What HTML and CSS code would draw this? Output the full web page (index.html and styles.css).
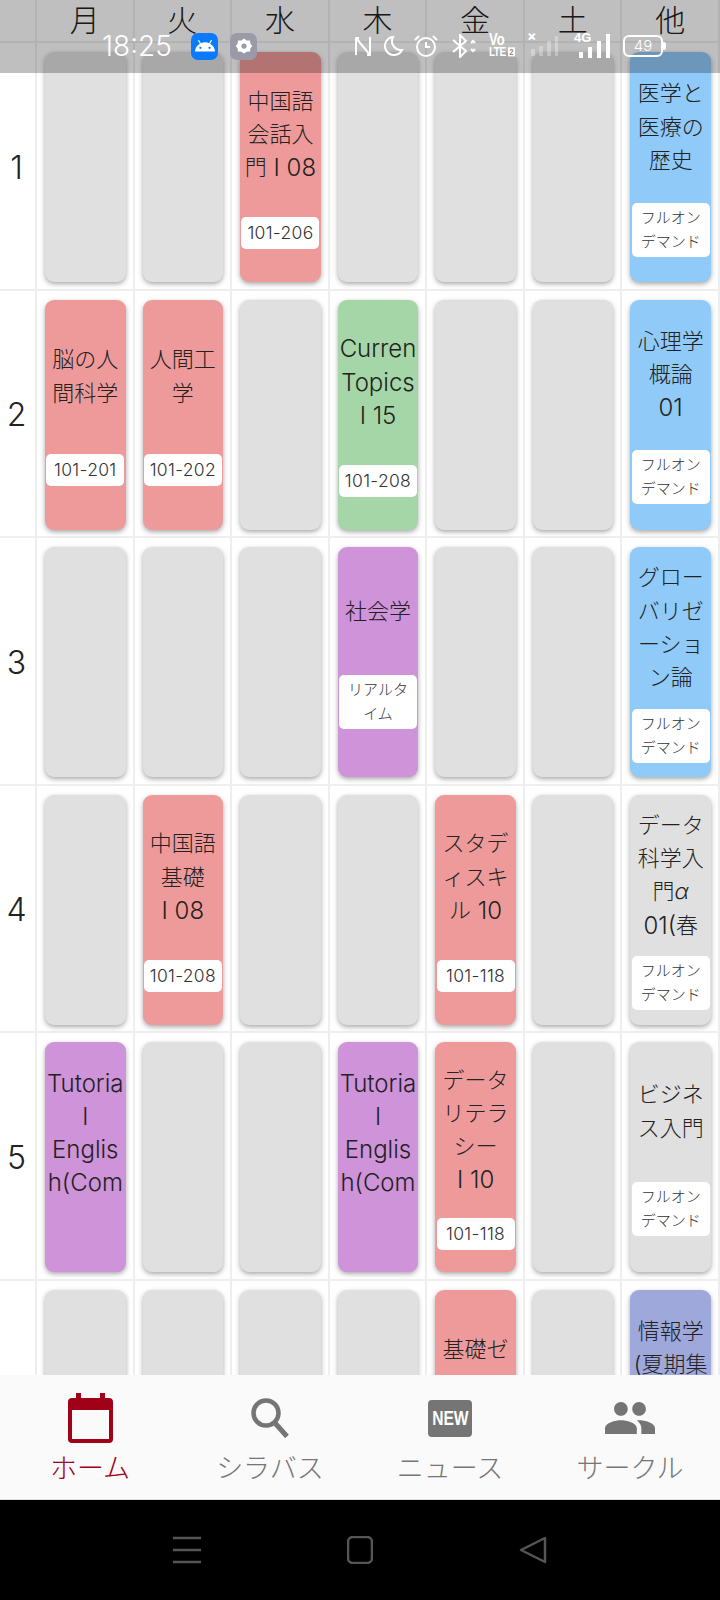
FILE: index.html
```html
<!DOCTYPE html>
<html lang="ja">
<head>
    <meta charset="UTF-8">
    <meta name="viewport" content="width=device-width, initial-scale=1.0">
    <title>時間割</title>
    <link rel="stylesheet" href="styles.css">
</head>
<body>
    <div class="statusbar">
        <span class="time">18:25</span>
        <span class="notif notif-blue">
            <svg viewBox="0 0 24 24" width="22" height="22"><path fill="#fff" d="M17.6 9.48l1.84-3.18c.16-.31.04-.69-.26-.85a.637.637 0 0 0-.83.22l-1.88 3.24a11.43 11.43 0 0 0-8.94 0L5.65 5.67a.643.643 0 0 0-.87-.2c-.28.18-.37.54-.22.83L6.4 9.48A10.78 10.78 0 0 0 1 18h22a10.78 10.78 0 0 0-5.4-8.52zM7 15.25a1.25 1.25 0 1 1 0-2.5 1.25 1.25 0 0 1 0 2.5zm10 0a1.25 1.25 0 1 1 0-2.5 1.25 1.25 0 0 1 0 2.5z"/></svg>
        </span>
        <span class="notif notif-grey">
            <svg viewBox="0 0 24 24" width="18" height="18"><path fill="#fff" fill-rule="evenodd" d="M12 2l3.5 2.5 4.5.3.6 4.2L23 12l-2.4 3-.6 4.2-4.5.3L12 22l-3.5-2.5-4.500-.3L3.400 15 1 12l2.400-3 .6-4.200 4.500-.3zM12 8.500a3.500 3.500 0 1 0 0 7 3.500 3.500 0 0 0 0-7z"/></svg>
        </span>
        <div class="status-icons">
            <svg class="s-nfc" viewBox="0 0 18 22" width="18" height="22"><path fill="none" stroke="#fff" stroke-width="2" stroke-linejoin="round" d="M2 20V3l14 17V2"/><path fill="none" stroke="#fff" stroke-width="2" d="M2 3h3M16 20h-3"/></svg>
            <svg class="s-moon" viewBox="0 0 20 22" width="20" height="22"><path fill="none" stroke="#fff" stroke-width="2" d="M9 2a9 9 0 1 0 9 13A9 9 0 0 1 9 2z"/></svg>
            <svg class="s-alarm" viewBox="0 0 24 24" width="24" height="24"><circle cx="12" cy="13" r="9" fill="none" stroke="#fff" stroke-width="2"/><path fill="none" stroke="#fff" stroke-width="2" d="M12 8v5h4M1 6l4-4M23 6l-4-4"/></svg>
            <svg class="s-bt" viewBox="0 0 26 24" width="26" height="24"><path fill="none" stroke="#fff" stroke-width="2" d="M2 6l13 11-6 6V1l6 6L2 18"/><path fill="none" stroke="#fff" stroke-width="2" d="M20 9l2-2 2 2M20 15l2 2 2-2"/></svg>
            <span class="s-volte"><span class="vo">Vo</span><span class="lte">LTE<b>2</b></span></span>
            <span class="s-sim-off">
                <span class="s-x">×</span>
                <svg viewBox="0 0 30 20" width="30" height="20"><path fill="#fff" fill-opacity=".3" d="M1 13h4v7H1zM9 10h4v10H9zM17 5h4v15h-4zM25 0h3v20h-3z"/></svg>
            </span>
            <span class="s-signal">
                <span class="s-4g">4G</span>
                <svg viewBox="0 0 32 24" width="32" height="24"><path fill="#fff" d="M1 18h4v6H1zM10 13h4v11h-4zM19 7h4v17h-4zM28 0h4v24h-4z"/></svg>
            </span>
            <span class="battery"><span class="battery-body">49</span><span class="battery-tip"></span></span>
        </div>
    </div>

    <main class="timetable">
        <div class="head"></div>
        <div class="head">月</div>
        <div class="head">火</div>
        <div class="head">水</div>
        <div class="head">木</div>
        <div class="head">金</div>
        <div class="head">土</div>
        <div class="head">他</div>

        <div class="period">1</div>
        <div class="cell"><div class="card"></div></div>
        <div class="cell"><div class="card"></div></div>
        <div class="cell"><div class="card red"><div class="title">中国語<br>会話入<br>門<span class="en"> I 08</span></div><div class="room">101-206</div></div></div>
        <div class="cell"><div class="card"></div></div>
        <div class="cell"><div class="card"></div></div>
        <div class="cell"><div class="card"></div></div>
        <div class="cell"><div class="card blue"><div class="title">医学と<br>医療の<br>歴史</div><div class="room small">フルオン<br>デマンド</div></div></div>

        <div class="period">2</div>
        <div class="cell"><div class="card red"><div class="title">脳の人<br>間科学</div><div class="room">101-201</div></div></div>
        <div class="cell"><div class="card red"><div class="title">人間工<br>学</div><div class="room">101-202</div></div></div>
        <div class="cell"><div class="card"></div></div>
        <div class="cell"><div class="card green"><div class="title"><span class="en">Curren<br>Topics<br>I 15</span></div><div class="room">101-208</div></div></div>
        <div class="cell"><div class="card"></div></div>
        <div class="cell"><div class="card"></div></div>
        <div class="cell"><div class="card blue"><div class="title">心理学<br>概論<br><span class="en">01</span></div><div class="room small">フルオン<br>デマンド</div></div></div>

        <div class="period">3</div>
        <div class="cell"><div class="card"></div></div>
        <div class="cell"><div class="card"></div></div>
        <div class="cell"><div class="card"></div></div>
        <div class="cell"><div class="card purple"><div class="title">社会学</div><div class="room small">リアルタ<br>イム</div></div></div>
        <div class="cell"><div class="card"></div></div>
        <div class="cell"><div class="card"></div></div>
        <div class="cell"><div class="card blue"><div class="title">グロー<br>バリゼ<br>ーショ<br>ン論</div><div class="room small">フルオン<br>デマンド</div></div></div>

        <div class="period">4</div>
        <div class="cell"><div class="card"></div></div>
        <div class="cell"><div class="card red"><div class="title">中国語<br>基礎<br><span class="en">I 08</span></div><div class="room">101-208</div></div></div>
        <div class="cell"><div class="card"></div></div>
        <div class="cell"><div class="card"></div></div>
        <div class="cell"><div class="card red"><div class="title">スタデ<br>ィスキ<br>ル<span class="en"> 10</span></div><div class="room">101-118</div></div></div>
        <div class="cell"><div class="card"></div></div>
        <div class="cell"><div class="card"><div class="title">データ<br>科学入<br>門<i>α</i><br><span class="en">01(</span>春</div><div class="room small">フルオン<br>デマンド</div></div></div>

        <div class="period">5</div>
        <div class="cell"><div class="card purple"><div class="title"><span class="en">Tutoria<br>l<br>Englis<br>h(Com</span></div><div class="room none"></div></div></div>
        <div class="cell"><div class="card"></div></div>
        <div class="cell"><div class="card"></div></div>
        <div class="cell"><div class="card purple"><div class="title"><span class="en">Tutoria<br>l<br>Englis<br>h(Com</span></div><div class="room none"></div></div></div>
        <div class="cell"><div class="card red"><div class="title">データ<br>リテラ<br>シー<br><span class="en">I 10</span></div><div class="room">101-118</div></div></div>
        <div class="cell"><div class="card"></div></div>
        <div class="cell"><div class="card"><div class="title">ビジネ<br>ス入門</div><div class="room small">フルオン<br>デマンド</div></div></div>

        <div class="period"></div>
        <div class="cell"><div class="card"></div></div>
        <div class="cell"><div class="card"></div></div>
        <div class="cell"><div class="card"></div></div>
        <div class="cell"><div class="card"></div></div>
        <div class="cell"><div class="card red"><div class="title">基礎ゼ<br>ミ</div><div class="room">101-118</div></div></div>
        <div class="cell"><div class="card"></div></div>
        <div class="cell"><div class="card indigo"><div class="title">情報学<br>(夏期集<br>中)</div><div class="room small">フルオン<br>デマンド</div></div></div>
    </main>

    <nav class="tabs">
        <a class="tab active">
            <span class="tab-icon">
                <svg viewBox="0 0 45 50" width="45" height="50"><path fill="#a00018" fill-rule="evenodd" d="M8 0h5v5h19V0h5v5h4q4 0 4 4v37q0 4-4 4H4q-4 0-4-4V9q0-4 4-4h4zM4 17v29h37V17z"/></svg>
            </span>
            ホーム
        </a>
        <a class="tab">
            <span class="tab-icon">
                <svg viewBox="0 0 38 40" width="38" height="40"><circle cx="15" cy="15" r="12.500" fill="none" stroke="#757575" stroke-width="4.500"/><path d="M23.500 24.500l12.500 14" stroke="#757575" stroke-width="5" fill="none"/></svg>
            </span>
            シラバス
        </a>
        <a class="tab">
            <span class="tab-icon"><span class="new-badge"><span class="new-text">NEW</span></span></span>
            ニュース
        </a>
        <a class="tab">
            <span class="tab-icon">
                <svg viewBox="1 5 22 14" width="50" height="32"><path fill="#757575" d="M16 11c1.660 0 2.990-1.340 2.990-3S17.660 5 16 5c-1.660 0-3 1.340-3 3s1.340 3 3 3zm-8 0c1.660 0 2.990-1.340 2.990-3S9.660 5 8 5C6.340 5 5 6.340 5 8s1.340 3 3 3zm0 2c-2.330 0-7 1.170-7 3.500V19h14v-2.500c0-2.330-4.670-3.500-7-3.500zm8 0c-.29 0-.62.02-.97.05 1.160.84 1.970 1.970 1.970 3.450V19h6v-2.500c0-2.330-4.670-3.500-7-3.500z"/></svg>
            </span>
            サークル
        </a>
    </nav>

    <div class="sysbar">
        <svg viewBox="0 0 28 28" width="28" height="28"><path stroke="#555" stroke-width="2.500" d="M0 2h28M0 14h28M0 26h28"/></svg>
        <svg viewBox="0 0 26 28" width="26" height="28"><rect x="1" y="1" width="24" height="26" rx="5" fill="none" stroke="#555" stroke-width="2.500"/></svg>
        <svg viewBox="0 0 28 28" width="28" height="28"><path fill="none" stroke="#555" stroke-width="2.500" stroke-linejoin="round" d="M26 2v24L2 14z"/></svg>
    </div>
</body>
</html>
```

FILE: styles.css
```css
* {
    box-sizing: border-box;
}

body {
    margin: 0;
    width: 720px;
    height: 1600px;
    overflow: hidden;
    display: flex;
    flex-direction: column;
    position: relative;
    background: #fff;
    color: #222;
    font-family: Inter, "Noto Sans CJK JP", sans-serif;
    font-weight: 300;
}

/* status bar lies over the grid */
.statusbar {
    position: absolute;
    top: 0;
    left: 0;
    width: 720px;
    height: 73px;
    background: rgba(0, 0, 0, .25);
    color: #fff;
    display: flex;
    align-items: center;
    padding: 19px 0 0 102px;
    z-index: 5;
}

.time {
    font-size: 28px;
    line-height: 28px;
    width: 89px;
}

.notif {
    width: 27px;
    height: 27px;
    border-radius: 7px;
    display: flex;
    align-items: center;
    justify-content: center;
}

.notif-blue {
    background: #0a7bff;
    margin-right: 12px;
}

.notif-grey {
    background: #9a9aa8;
}

.status-icons {
    display: flex;
    align-items: center;
    margin-left: 97px;
}

.s-moon {
    margin-left: 12px;
}

.s-alarm {
    margin-left: 10px;
}

.s-bt {
    margin-left: 13px;
}

.s-volte {
    margin-left: 12px;
    width: 28px;
    display: flex;
    flex-direction: column;
    font-family: "Liberation Sans", sans-serif;
    font-weight: 700;
    white-space: nowrap;
    transform: scaleY(1.3);
}

.vo {
    font-size: 13px;
    line-height: 9px;
}

.lte {
    font-size: 10px;
    line-height: 11px;
    letter-spacing: -.5px;
    display: flex;
    align-items: center;
}

.lte b {
    width: 7px;
    height: 7px;
    margin-left: 2px;
    background: #fff;
    color: #888;
    font-size: 7px;
    line-height: 7px;
    text-align: center;
}

.s-sim-off {
    margin-left: 13px;
    position: relative;
    display: flex;
}

.s-x {
    position: absolute;
    left: -3px;
    top: -9px;
    font-size: 14px;
    font-weight: 700;
}

.s-signal {
    margin-left: 18px;
    position: relative;
    display: flex;
}

.s-4g {
    position: absolute;
    left: -4px;
    top: -3px;
    font-family: "Liberation Sans", sans-serif;
    font-size: 13px;
    line-height: 14px;
    font-weight: 700;
}

.battery {
    margin-left: 13px;
    display: flex;
    align-items: center;
}

.battery-body {
    width: 40px;
    height: 22px;
    border: 2px solid #fff;
    border-radius: 6px;
    font-size: 15px;
    line-height: 18px;
    text-align: center;
}

.battery-tip {
    width: 3px;
    height: 8px;
    background: #fff;
    border-radius: 0 2px 2px 0;
}

.timetable {
    flex: 1;
    min-height: 0;
    overflow: hidden;
    display: grid;
    grid-template-columns: 37px repeat(7, 1fr);
    grid-template-rows: 43px;
    grid-auto-rows: 247.5px;
}

.head {
    border-right: 2px solid #eee;
    border-bottom: 2px solid #eee;
    font-size: 30px;
    line-height: 40px;
    text-align: center;
}

.period {
    border-right: 2px solid #eee;
    border-bottom: 2px solid #eee;
    display: flex;
    align-items: center;
    justify-content: center;
    font-size: 32px;
    padding: 3px 2px 0 0;
}

.cell {
    border-right: 2px solid #eee;
    border-bottom: 2px solid #eee;
    padding: 9px 7px 0 8px;
}

.card {
    height: 230px;
    border-radius: 9px;
    background: #e0e0e0;
    box-shadow: 0 2px 5px rgba(0, 0, 0, .35);
    display: flex;
    flex-direction: column;
    justify-content: space-evenly;
    align-items: center;
}

.red {
    background: #ef9a9a;
}

.blue {
    background: #90caf9;
}

.green {
    background: #a5d6a7;
}

.purple {
    background: #ce93d8;
}

.indigo {
    background: #9fa8da;
}

.title {
    font-size: 22px;
    line-height: 33.3px;
    text-align: center;
    white-space: nowrap;
}

/* latin part of a title runs wider than the kanji */
.en {
    font-size: 24px;
    line-height: 1;
    vertical-align: -1px;
}

.room {
    width: 78px;
    min-height: 32px;
    background: #fff;
    border-radius: 5px;
    color: #333;
    font-size: 17.5px;
    letter-spacing: .3px;
    line-height: 32px;
    text-align: center;
    white-space: nowrap;
}

.room.small {
    font-size: 15px;
    letter-spacing: 0;
    line-height: 24px;
    padding: 3px 0;
}

.room.none {
    min-height: 23px;
    visibility: hidden;
}

.tabs {
    height: 125px;
    flex: none;
    display: grid;
    grid-template-columns: repeat(4, 1fr);
    background: #fafafa;
    border-bottom: 1px solid #ddd;
    position: relative;
    z-index: 2;
}

.tab {
    display: flex;
    flex-direction: column;
    align-items: center;
    color: #757575;
    font-size: 27px;
    line-height: 36px;
    padding-top: 15px;
}

.tab.active {
    color: #a00018;
}

.tab-icon {
    height: 56px;
    margin-bottom: 5px;
    display: flex;
    align-items: center;
    justify-content: center;
}

.new-badge {
    width: 44px;
    height: 37px;
    border-radius: 4px;
    background: #757575;
    color: #fff;
    font-family: "Liberation Sans", sans-serif;
    font-size: 20px;
    font-weight: 700;
    line-height: 37px;
    text-align: center;
    display: flex;
    justify-content: center;
}

.new-text {
    transform: scaleX(.78);
}

.sysbar {
    height: 100px;
    flex: none;
    background: #000;
    display: flex;
    align-items: center;
    justify-content: center;
    gap: 146px;
}
```
